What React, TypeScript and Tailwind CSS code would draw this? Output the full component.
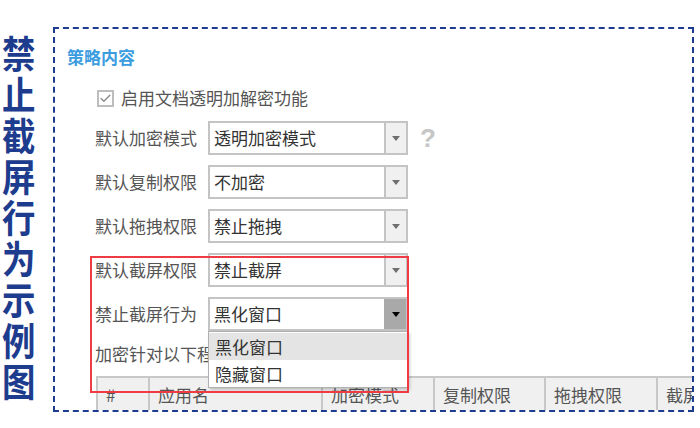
import { Check } from 'lucide-react';

const font = { fontFamily: '"Noto Sans CJK SC", "Noto Sans", sans-serif' };

function Arrow({ dark }: { dark?: boolean }) {
  return (
    <div
      className={`w-[22px] h-full flex items-center justify-center border-l-2 ${
        dark ? 'bg-[#a9a9a9] border-[#a9a9a9]' : 'bg-[#f0f0f0] border-[#c4c4c4]'
      }`}
    >
      <span
        className={`w-0 h-0 border-l-[4px] border-r-[4px] border-t-[5px] border-l-transparent border-r-transparent ${
          dark ? 'border-t-black' : 'border-t-[#6f6f6f]'
        }`}
      />
    </div>
  );
}

function Select({ value, dark }: { value: string; dark?: boolean }) {
  return (
    <div className="w-[200px] h-[34px] flex border-2 border-[#c4c4c4] bg-white">
      <div className="flex-1 pl-[4px] flex items-center text-[17px] text-[#333]">{value}</div>
      <Arrow dark={dark} />
    </div>
  );
}

function Row({ label, value, dark, extra }: { label: string; value: string; dark?: boolean; extra?: React.ReactNode }) {
  return (
    <div className="flex items-center h-[34px]">
      <div className="w-[113px] text-[17px] text-[#555]">{label}</div>
      <Select value={value} dark={dark} />
      {extra}
    </div>
  );
}

const cols = [
  { t: '#', w: 'w-[52px]' },
  { t: '应用名', w: 'w-[173px]' },
  { t: '加密模式', w: 'w-[112px]' },
  { t: '复制权限', w: 'w-[111px]' },
  { t: '拖拽权限', w: 'w-[112px]' },
  { t: '截屏权限', w: 'w-[112px]' },
];

export default function App() {
  return (
    <div className="w-[700px] h-[428px] bg-white flex relative overflow-hidden" style={font}>
      <div className="w-[53px] pt-[31px] flex flex-col items-start pl-[2px]">
        {'禁止截屏行为示例图'.split('').map((c) => (
          <div key={c} className="h-[41px] leading-[41px] text-[38px] font-bold text-[#1e3c8e] scale-x-[0.88] origin-left">
            {c}
          </div>
        ))}
      </div>

      <div className="mt-[27px] w-[641px] h-[385px] border-2 border-dashed border-[#1d3c8f] overflow-hidden">
        <div className="pl-[12px] pt-[14px] h-[27px] leading-[27px] text-[17px] font-bold text-[#3b9de0]">策略内容</div>

        <div className="ml-[42px] mt-[32px] flex items-center h-[20px]">
          <div className="w-[17px] h-[17px] border-2 border-[#bdbdbd] flex items-center justify-center">
            <Check size={13} strokeWidth={2.5} className="text-[#8a8a8a]" />
          </div>
          <span className="ml-[7px] text-[17px] text-[#555]">启用文档透明加解密功能</span>
        </div>

        <div className="ml-[40px] mt-[13px] flex flex-col gap-[10px]">
          <Row
            label="默认加密模式"
            value="透明加密模式"
            extra={<span className="ml-[12px] text-[26px] font-bold text-[#c6c6c6]" style={{ fontFamily: '"Liberation Sans", sans-serif' }}>?</span>}
          />
          <Row label="默认复制权限" value="不加密" />
          <Row label="默认拖拽权限" value="禁止拖拽" />
          <Row label="默认截屏权限" value="禁止截屏" />
          <Row label="禁止截屏行为" value="黑化窗口" dark />
        </div>
        <div className="ml-[40px] h-[45px] flex items-center text-[17px] text-[#555]">加密针对以下程序有效</div>

        <div className="ml-[41px] flex h-[36px] bg-[#f0f0f0] border-t-2 border-l-2 border-[#c8c8c8] w-max">
          {cols.map((c) => (
            <div key={c.t} className={`${c.w} shrink-0 border-r-2 border-[#c8c8c8] pl-[8px] flex items-center text-[17px] text-[#555]`}>
              {c.t}
            </div>
          ))}
        </div>
      </div>

      <div className="absolute left-[208px] top-[331px] w-[200px] h-[57px] bg-white border border-[#b0b0b0] shadow-[2px_2px_3px_rgba(0,0,0,0.2)] flex flex-col pt-[1px]">
        <div className="h-[27px] bg-[#e4e4e4] pl-[6px] flex items-center text-[17px] text-[#333]">黑化窗口</div>
        <div className="h-[27px] pl-[6px] flex items-center text-[17px] text-[#333]">隐藏窗口</div>
      </div>

      <div className="absolute left-[90px] top-[256px] w-[319px] h-[137px] border-2 border-[#ee3b44]" />
    </div>
  );
}
